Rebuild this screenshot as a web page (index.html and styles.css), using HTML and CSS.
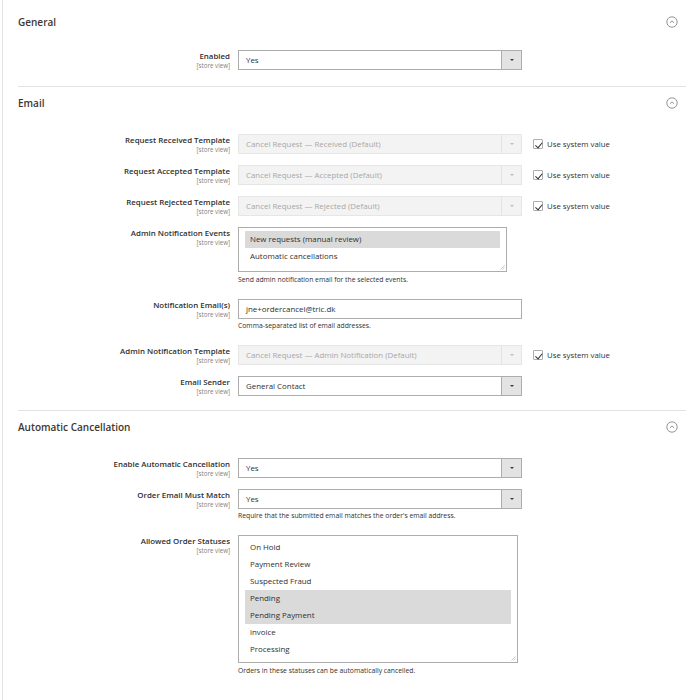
FILE: index.html
```html
<!DOCTYPE html>
<html lang="en">
<head>
    <meta charset="UTF-8">
    <meta name="viewport" content="width=device-width, initial-scale=1.0">
    <title>Order Cancellation Configuration</title>
    <link rel="stylesheet" href="styles.css">
</head>
<body>
    <div class="config">

        <section class="group group-first">
            <div class="group-head">
                <h2>General</h2>
                <span class="toggle"><svg viewBox="0 0 12 12"><circle cx="6" cy="6" r="5.2"/><path d="M3.9 6.9 6 4.9 8.1 6.9"/></svg></span>
            </div>
            <div class="field">
                <div class="field-label">Enabled<span class="scope">[store view]</span></div>
                <div class="field-control">
                    <div class="select"><span class="select-value">Yes</span><span class="select-arrow"></span></div>
                </div>
            </div>
        </section>

        <section class="group">
            <div class="group-head">
                <h2>Email</h2>
                <span class="toggle"><svg viewBox="0 0 12 12"><circle cx="6" cy="6" r="5.2"/><path d="M3.9 6.9 6 4.9 8.1 6.9"/></svg></span>
            </div>
            <div class="field">
                <div class="field-label">Request Received Template<span class="scope">[store view]</span></div>
                <div class="field-control">
                    <div class="select disabled"><span class="select-value">Cancel Request — Received (Default)</span><span class="select-arrow"></span></div>
                </div>
                <label class="use-default"><span class="checkbox checked"></span>Use system value</label>
            </div>
            <div class="field">
                <div class="field-label">Request Accepted Template<span class="scope">[store view]</span></div>
                <div class="field-control">
                    <div class="select disabled"><span class="select-value">Cancel Request — Accepted (Default)</span><span class="select-arrow"></span></div>
                </div>
                <label class="use-default"><span class="checkbox checked"></span>Use system value</label>
            </div>
            <div class="field">
                <div class="field-label">Request Rejected Template<span class="scope">[store view]</span></div>
                <div class="field-control">
                    <div class="select disabled"><span class="select-value">Cancel Request — Rejected (Default)</span><span class="select-arrow"></span></div>
                </div>
                <label class="use-default"><span class="checkbox checked"></span>Use system value</label>
            </div>
            <div class="field">
                <div class="field-label">Admin Notification Events<span class="scope">[store view]</span></div>
                <div class="field-control">
                    <div class="multiselect multiselect-events">
                        <div class="option selected">New requests (manual review)</div>
                        <div class="option">Automatic cancellations</div>
                        <svg class="grip" viewBox="0 0 6 6"><path d="M5.5 1.5 1.5 5.5M5.5 3.5 3.5 5.5"/></svg>
                    </div>
                    <p class="note">Send admin notification email for the selected events.</p>
                </div>
            </div>
            <div class="field">
                <div class="field-label">Notification Email(s)<span class="scope">[store view]</span></div>
                <div class="field-control">
                    <div class="input">jne+ordercancel@tric.dk</div>
                    <p class="note">Comma-separated list of email addresses.</p>
                </div>
            </div>
            <div class="field">
                <div class="field-label">Admin Notification Template<span class="scope">[store view]</span></div>
                <div class="field-control">
                    <div class="select disabled"><span class="select-value">Cancel Request — Admin Notification (Default)</span><span class="select-arrow"></span></div>
                </div>
                <label class="use-default"><span class="checkbox checked"></span>Use system value</label>
            </div>
            <div class="field">
                <div class="field-label">Email Sender<span class="scope">[store view]</span></div>
                <div class="field-control">
                    <div class="select"><span class="select-value">General Contact</span><span class="select-arrow"></span></div>
                </div>
            </div>
        </section>

        <section class="group group-last">
            <div class="group-head">
                <h2>Automatic Cancellation</h2>
                <span class="toggle"><svg viewBox="0 0 12 12"><circle cx="6" cy="6" r="5.2"/><path d="M3.9 6.9 6 4.9 8.1 6.9"/></svg></span>
            </div>
            <div class="field">
                <div class="field-label">Enable Automatic Cancellation<span class="scope">[store view]</span></div>
                <div class="field-control">
                    <div class="select"><span class="select-value">Yes</span><span class="select-arrow"></span></div>
                </div>
            </div>
            <div class="field">
                <div class="field-label">Order Email Must Match<span class="scope">[store view]</span></div>
                <div class="field-control">
                    <div class="select"><span class="select-value">Yes</span><span class="select-arrow"></span></div>
                    <p class="note">Require that the submitted email matches the order's email address.</p>
                </div>
            </div>
            <div class="field">
                <div class="field-label">Allowed Order Statuses<span class="scope">[store view]</span></div>
                <div class="field-control">
                    <div class="multiselect multiselect-statuses">
                        <div class="option">On Hold</div>
                        <div class="option">Payment Review</div>
                        <div class="option">Suspected Fraud</div>
                        <div class="option selected">Pending</div>
                        <div class="option selected">Pending Payment</div>
                        <div class="option">invoice</div>
                        <div class="option">Processing</div>
                        <svg class="grip" viewBox="0 0 6 6"><path d="M5.5 1.5 1.5 5.5M5.5 3.5 3.5 5.5"/></svg>
                    </div>
                    <p class="note">Orders in these statuses can be automatically cancelled.</p>
                </div>
            </div>
        </section>

    </div>
</body>
</html>
```

FILE: styles.css
```css
* {
    margin: 0;
    padding: 0;
    box-sizing: border-box;
}

body {
    font-family: 'Open Sans', 'Liberation Sans', sans-serif;
    font-size: 7.9px;
    color: #303030;
    background-color: #fff;
}

.config {
    margin-left: 2px;
    min-height: 700px;
    border-left: 1px solid #e3e3e3;
}

.group {
    margin: 0 14px 0 15px;
    padding-bottom: 14px;
    border-bottom: 1px solid #e3e3e3;
}

.group-first {
    padding-top: 6px;
    padding-bottom: 16px;
}

.group-last {
    border-bottom: none;
}

.group-head {
    display: flex;
    align-items: center;
    justify-content: space-between;
    padding-top: 9px;
    margin-bottom: 24px;
    height: 23px;
}

.group-first .group-head {
    margin-bottom: 21px;
}

.group-head h2 {
    font-size: 10px;
    font-weight: 600;
    color: #41362f;
    line-height: 14px;
}

.toggle {
    width: 12px;
    height: 12px;
    margin-right: 8px;
}

.toggle svg {
    display: block;
    width: 12px;
    height: 12px;
    fill: none;
    stroke: #7a7a7a;
    stroke-width: 0.8;
}

.field {
    display: grid;
    grid-template-columns: 212px 284px auto;
    column-gap: 8px;
    align-items: start;
    margin-bottom: 11px;
}

.field:last-child {
    margin-bottom: 0;
}

.field-label {
    text-align: right;
    font-weight: 600;
    line-height: 11px;
    padding-top: 1px;
}

.scope {
    display: block;
    font-size: 6.2px;
    font-weight: 400;
    color: #808080;
    line-height: 8px;
}

.select, .input {
    display: flex;
    align-items: center;
    height: 20px;
    border: 1px solid #adadad;
    background-color: #fff;
}

.select-value, .input {
    padding-left: 7px;
    flex: 1;
    white-space: nowrap;
    overflow: hidden;
}

.select-arrow {
    width: 20px;
    height: 100%;
    background-color: #e3e3e3;
    border-left: 1px solid #adadad;
    position: relative;
}

.select-arrow::after {
    content: "";
    position: absolute;
    left: 8px;
    top: 8px;
    border-left: 2px solid transparent;
    border-right: 2px solid transparent;
    border-top: 2.5px solid #41362f;
}

.select.disabled {
    border-color: #e6e6e6;
    background-color: #f3f3f3;
    color: #a8a8a8;
}

.select.disabled .select-arrow {
    background-color: #f3f3f3;
    border-left-color: #e3e3e3;
}

.select.disabled .select-arrow::after {
    border-top-color: #bdbdbd;
}

.use-default {
    display: flex;
    align-items: center;
    gap: 4px;
    height: 20px;
    margin-left: 3px;
    font-size: 7.8px;
    white-space: nowrap;
}

.checkbox {
    width: 10px;
    height: 10px;
    border: 1px solid #adadad;
    border-radius: 1px;
    background-color: #fff;
    position: relative;
}

.checkbox.checked::after {
    content: "";
    position: absolute;
    left: 2.5px;
    top: 0.5px;
    width: 3px;
    height: 5.5px;
    border-right: 1.2px solid #303030;
    border-bottom: 1.2px solid #303030;
    transform: rotate(40deg);
}

.multiselect {
    position: relative;
    border: 1px solid #adadad;
    padding: 3px 6px;
    margin-bottom: 3px;
}

.multiselect-events {
    width: 269px;
    height: 45px;
}

.multiselect-statuses {
    width: 280px;
    height: 128px;
    padding-top: 3px;
}

.option {
    height: 17px;
    line-height: 17px;
    padding-left: 5px;
}

.option.selected {
    background-color: #dadada;
}

.grip {
    position: absolute;
    right: 1px;
    bottom: 1px;
    width: 6px;
    height: 6px;
    fill: none;
    stroke: #b5b5b5;
    stroke-width: 0.7;
}

.note {
    font-size: 6.8px;
    line-height: 10px;
    margin-top: 2px;
    margin-bottom: 3px;
}
```
